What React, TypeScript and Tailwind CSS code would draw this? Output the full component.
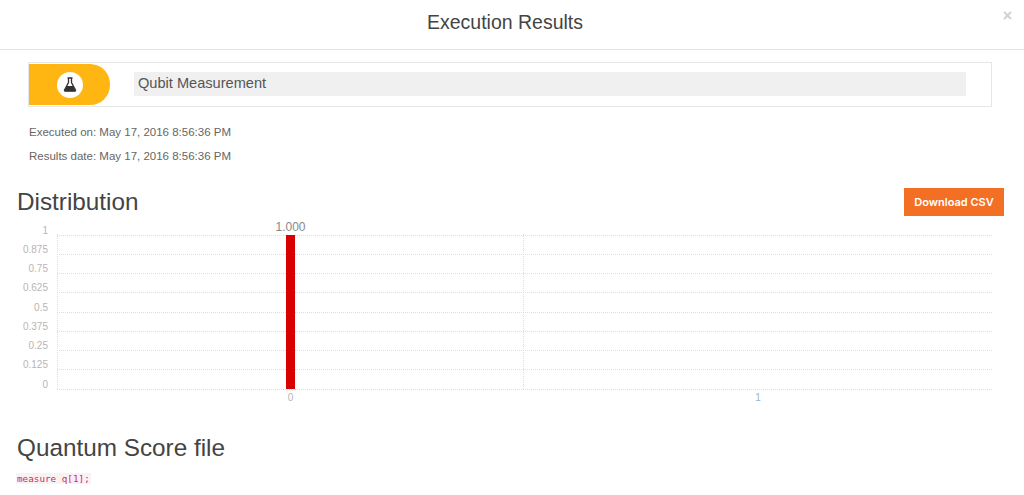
const ticks = ["1", "0.875", "0.75", "0.625", "0.5", "0.375", "0.25", "0.125", "0"];

const Chart = () => (
  <svg width="1024" height="187" viewBox="0 217 1024 187" className="block" style={{ fontFamily: '"Liberation Sans", Arial, sans-serif' }}>
    {ticks.map((t, i) => {
      const y = 235.5 + i * 19.25;
      return (
        <g key={t}>
          <line x1="57" x2="992" y1={Math.round(y) + 0.5} y2={Math.round(y) + 0.5} stroke="#dedede" strokeDasharray="1 1" />
          <text x="48" y={y - 1} textAnchor="end" fontSize="10" fill="#bbb4b4">
            {t}
          </text>
        </g>
      );
    })}
    <line x1="57.5" x2="57.5" y1="235" y2="390" stroke="#dedede" strokeDasharray="1 1" />
    <line x1="523.5" x2="523.5" y1="235" y2="390" stroke="#dedede" strokeDasharray="1 1" />
    <rect x="286" y="236" width="9" height="154" fill="#d90000" />
    <text x="290.5" y="232" textAnchor="middle" fontSize="12" fill="#888">
      1.000
    </text>
    <text x="290.5" y="402" textAnchor="middle" fontSize="10" fill="#b5b5b5">
      0
    </text>
    <text x="758" y="402" textAnchor="middle" fontSize="10" fill="#8fb8cc">
      1
    </text>
  </svg>
);

export default function App() {
  return (
    <div className="w-[1024px] h-[495px] overflow-hidden bg-white text-[#444] font-['Liberation_Sans',Arial,sans-serif]">
      <div className="relative h-[50px] border-b border-[#e5e5e5] flex items-center justify-center">
        <h4 className="mr-[14px] mb-[3px] text-[19.500px] leading-none text-[#444]">Execution Results</h4>
        <span className="absolute right-[12px] top-[8px] text-[16px] leading-none font-bold text-[#cfcfcf]">×</span>
      </div>

      <div className="ml-[28px] w-[964px] mt-[12px] h-[45px] border border-[#e6e6e6] flex items-center">
        <div className="w-[81px] h-[41px] bg-[#ffb612] rounded-r-[20px] flex items-center justify-center">
          <div className="w-[26px] h-[26px] rounded-full bg-white flex items-center justify-center">
            <svg width="14" height="15" viewBox="0 0 14 15">
              <path d="M4.500 1h5M5.500 1v4.500L1.500 13a.7.7 0 0 0 .6 1h9.800a.7.7 0 0 0 .6-1L8.500 5.500V1" fill="none" stroke="#333" strokeWidth="1.300" />
              <path d="M3.900 9h6.200l2.400 4.600a.5.5 0 0 1-.5.700H2a.5.5 0 0 1-.5-.7z" fill="#333" />
            </svg>
          </div>
        </div>
        <div className="ml-[24px] mb-[2px] w-[832px] h-[24px] bg-[#f0f0f0] pl-[4px] text-[14.600px] leading-[23px] text-[#555]">Qubit Measurement</div>
      </div>

      <div className="ml-[29px] mt-[13px] text-[11.500px] leading-[24px] text-[#666]">
        <p>Executed on: May 17, 2016 8:56:36 PM</p>
        <p>Results date: May 17, 2016 8:56:36 PM</p>
      </div>

      <div className="mt-[20px] pl-[17px] pr-[20px] flex items-center justify-between h-[28px]">
        <h3 className="text-[24.300px] leading-none text-[#444]">Distribution</h3>
        <button className="w-[100px] h-[28px] bg-[#f36f24] text-white text-[11px] font-semibold font-['Inter',sans-serif]">Download CSV</button>
      </div>

      <Chart />

      <h3 className="mt-[33px] ml-[17px] text-[24.300px] leading-none text-[#444]">Quantum Score file</h3>
      <code className="block w-fit mt-[13px] ml-[16px] px-[1px] bg-[#f9f2f4] text-[#d12a58] text-[9.300px] leading-[11px] font-['DejaVu_Sans_Mono',monospace]">measure q[1];</code>
    </div>
  );
}
